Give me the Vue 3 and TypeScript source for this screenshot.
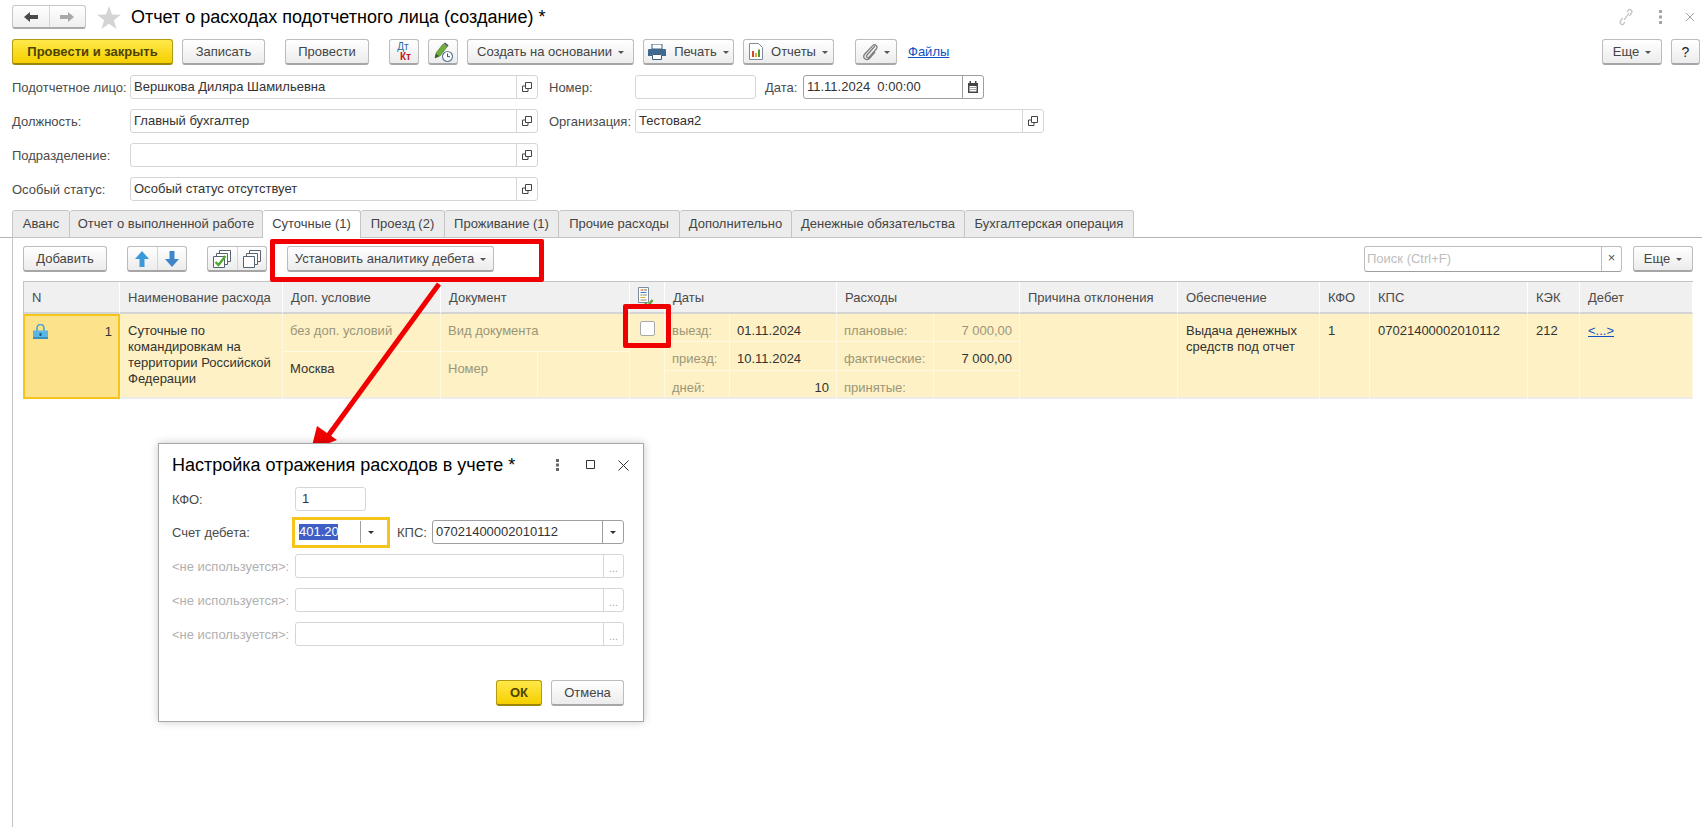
<script setup lang="ts">
interface Tool { label: string; w: number; gap: number; caret?: boolean; icon?: string }
const mainTools: Tool[] = [
  { label: 'Записать', w: 83, gap: 9 },
  { label: 'Провести', w: 84, gap: 20 },
  { label: '', w: 30, gap: 20, icon: 'dtkt' },
  { label: '', w: 30, gap: 9, icon: 'pencil' },
  { label: 'Создать на основании', w: 167, gap: 9, caret: true },
  { label: 'Печать', w: 91, gap: 9, caret: true, icon: 'print' },
  { label: 'Отчеты', w: 91, gap: 9, caret: true, icon: 'report' },
  { label: '', w: 42, gap: 21, caret: true, icon: 'clip' },
]
const tabs = [
  { label: 'Аванс', w: 58 },
  { label: 'Отчет о выполненной работе', w: 193 },
  { label: 'Суточные (1)', w: 98, active: true },
  { label: 'Проезд (2)', w: 84 },
  { label: 'Проживание (1)', w: 114 },
  { label: 'Прочие расходы', w: 121 },
  { label: 'Дополнительно', w: 112 },
  { label: 'Денежные обязательства', w: 173 },
  { label: 'Бухгалтерская операция', w: 169 },
]
const headers = ['N', 'Наименование расхода', 'Доп. условие', 'Документ', '', 'Даты', 'Расходы', 'Причина отклонения', 'Обеспечение', 'КФО', 'КПС', 'КЭК', 'Дебет']
const unused = ['<не используется>:', '<не используется>:', '<не используется>:']
</script>

<template>
  <div class="page">
    <header class="head">
      <div class="nav">
        <span class="nav-cell">
          <svg width="14" height="12" viewBox="0 0 14 12"><path d="M0 6 6 1v3h8v4H6v3z" fill="#4a4a4a" /></svg>
        </span>
        <span class="nav-cell">
          <svg width="14" height="12" viewBox="0 0 14 12"><path d="M14 6 8 1v3H0v4h8v3z" fill="#a8a8a8" /></svg>
        </span>
      </div>
      <svg class="star" width="24" height="23" viewBox="0 0 24 23"><path d="M12 0l3 8.400 9 .3-7.100 5.500 2.600 8.800L12 17.800l-7.500 5.200 2.600-8.800L0 8.700l9-.3z" fill="#d4d4d4" /></svg>
      <h1 class="title">Отчет о расходах подотчетного лица (создание) *</h1>
      <div class="win-icons">
        <svg width="16" height="18" viewBox="0 0 16 18" fill="none" stroke="#bdbdbd" stroke-width="1.200"><path d="M6 12 11 5M9 4l1.500-2c1-1.200 4-.2 3.500 2l-2.500 4M7 14l-1.500 2c-1 1.200-4 .2-3.500-2l2.500-4" /></svg>
        <svg width="4" height="16" viewBox="0 0 4 16"><path d="M0 1h3v3H0zM0 6.500h3v3H0zM0 12h3v3H0z" fill="#a5a5a5" /></svg>
        <svg width="10" height="10" viewBox="0 0 10 10" fill="none" stroke="#a5a5a5"><path d="M1 1l8 8M9 1l-8 8" /></svg>
      </div>
    </header>

    <div class="toolbar">
      <button class="btn primary main-btn">Провести и закрыть</button>
      <button
        v-for="t in mainTools"
        :key="t.label + t.icon"
        class="btn"
        :style="{ width: t.w + 'px', marginLeft: t.gap + 'px' }"
      >
        <span v-if="t.icon === 'dtkt'" class="dtkt"><i>Дт</i><b>Кт</b></span>
        <svg v-if="t.icon === 'pencil'" width="20" height="20" viewBox="0 0 20 20">
          <path d="M2 16l1-5L10 2l4 3-7 9z" fill="#6fae3a" stroke="#4a7d24" stroke-width=".6" />
          <path d="M10.500 1.500l1.500-1 3.500 2.800-1 1.700z" fill="#4b5c68" />
          <path d="M2 16l1-4 3 2z" fill="#3a4a30" />
          <circle cx="14.500" cy="14.500" r="5" fill="#fff" stroke="#5c7d9c" stroke-width="1.200" />
          <path d="M14.500 11.500v3.200h2.500" fill="none" stroke="#3a4f63" />
        </svg>
        <svg v-if="t.icon === 'print'" class="lead" width="18" height="16" viewBox="0 0 18 16">
          <path d="M4 0h10v5H4z" fill="#fff" stroke="#3d5f7c" />
          <path d="M1 5h16a1 1 0 0 1 1 1v6h-4v-2H4v2H0V6a1 1 0 0 1 1-1z" fill="#3d6a8e" />
          <path d="M4.500 10.500h9v5h-9z" fill="#fff" stroke="#3d5f7c" />
        </svg>
        <svg v-if="t.icon === 'report'" class="lead" width="14" height="17" viewBox="0 0 14 17">
          <path d="M.5.500h9l4 4v12H.5z" fill="#fff" stroke="#7d8d9c" />
          <path d="M3 8h2v6H3z" fill="#d04a2c" /><path d="M6 10h2v4H6z" fill="#e2a92a" /><path d="M9 6.500h2V14H9z" fill="#4c9a3d" />
        </svg>
        <svg v-if="t.icon === 'clip'" width="16" height="18" viewBox="0 0 16 18" fill="none" stroke="#7d7d7d" stroke-width="1.300"><path d="M13 3 5 12c-1.500 2 .8 3.600 2.300 2l7-8c2-2.600-1.200-5.800-3.600-3.400L2.800 11c-3 3.500 1.600 7.600 4.800 4.200L13 9" /></svg>
        <span v-if="t.label">{{ t.label }}</span>
        <span v-if="t.caret" class="caret"></span>
      </button>
      <a class="link files">Файлы</a>
      <button class="btn more">Еще<span class="caret"></span></button>
      <button class="btn help">?</button>
    </div>

    <section class="form">
      <div class="form-row">
        <label class="lbl">Подотчетное лицо:</label>
        <div class="field wide"><span class="val">Вершкова Диляра Шамильевна</span><span class="fbtn"><svg class="open" width="10" height="10" viewBox="0 0 10 10" fill="none" stroke="#444"><path d="M3.500.500h6v6h-6zM3 4H.500v5.500H6V7" /></svg></span></div>
        <label class="lbl2">Номер:</label>
        <div class="field num"></div>
        <label class="lbl3">Дата:</label>
        <div class="field date"><span class="val">11.11.2024&nbsp;&nbsp;0:00:00</span><span class="fbtn dark"><svg width="10" height="12" viewBox="0 0 10 12"><path d="M0 2h10v10H0z" fill="#444" /><path d="M1.500 0h1.500v2H1.500zM7 0h1.500v2H7z" fill="#444" /><path d="M1.500 5h7v5.500h-7z" fill="#fff" /><path d="M2.500 6h1v1h-1zM4.500 6h1v1h-1zM6.500 6h1v1h-1zM2.500 8h1v1h-1zM4.500 8h1v1h-1zM6.500 8h1v1h-1z" fill="#444" /></svg></span></div>
      </div>
      <div class="form-row">
        <label class="lbl">Должность:</label>
        <div class="field wide"><span class="val">Главный бухгалтер</span><span class="fbtn"><svg class="open" width="10" height="10" viewBox="0 0 10 10" fill="none" stroke="#444"><path d="M3.500.500h6v6h-6zM3 4H.500v5.500H6V7" /></svg></span></div>
        <label class="lbl2">Организация:</label>
        <div class="field org"><span class="val">Тестовая2</span><span class="fbtn"><svg class="open" width="10" height="10" viewBox="0 0 10 10" fill="none" stroke="#444"><path d="M3.500.500h6v6h-6zM3 4H.500v5.500H6V7" /></svg></span></div>
      </div>
      <div class="form-row">
        <label class="lbl">Подразделение:</label>
        <div class="field wide"><span class="val"></span><span class="fbtn"><svg class="open" width="10" height="10" viewBox="0 0 10 10" fill="none" stroke="#444"><path d="M3.500.500h6v6h-6zM3 4H.500v5.500H6V7" /></svg></span></div>
      </div>
      <div class="form-row">
        <label class="lbl">Особый статус:</label>
        <div class="field wide"><span class="val">Особый статус отсутствует</span><span class="fbtn"><svg class="open" width="10" height="10" viewBox="0 0 10 10" fill="none" stroke="#444"><path d="M3.500.500h6v6h-6zM3 4H.500v5.500H6V7" /></svg></span></div>
      </div>
    </section>

    <nav class="tabs">
      <span
        v-for="t in tabs"
        :key="t.label"
        class="tab"
        :class="{ active: t.active }"
        :style="{ width: t.w + 'px' }"
      >{{ t.label }}</span>
    </nav>

    <section class="panel">
      <div class="panel-bar">
        <button class="btn add">Добавить</button>
        <div class="btn group arrows">
          <span class="cell"><svg width="14" height="16" viewBox="0 0 14 16"><path d="M7 0l7 8H9.500v8h-5V8H0z" fill="#3a9ad9" /></svg></span>
          <span class="cell"><svg width="14" height="16" viewBox="0 0 14 16"><path d="M7 16l7-8H9.500V0h-5v8H0z" fill="#3f86c9" /></svg></span>
        </div>
        <div class="btn group checks">
          <span class="cell"><svg width="18" height="18" viewBox="0 0 18 18">
            <path d="M6.500.500h11v11h-11z" fill="#fff" stroke="#54636f" /><path d="M3.500 3.500h11v11h-11z" fill="#fff" stroke="#54636f" /><path d="M.500 6.500h11v11H.500z" fill="#fff" stroke="#54636f" />
            <path d="M2.500 12l3 3 7-9" fill="none" stroke="#4fa62c" stroke-width="2.400" /></svg></span>
          <span class="cell"><svg width="18" height="18" viewBox="0 0 18 18" fill="#fff" stroke="#54636f">
            <path d="M6.500.500h11v11h-11z" /><path d="M3.500 3.500h11v11h-11z" /><path d="M.500 6.500h11v11H.500z" /></svg></span>
        </div>
        <button class="btn analytic">Установить аналитику дебета<span class="caret"></span></button>
        <div class="search"><span class="ph">Поиск (Ctrl+F)</span><span class="sx">×</span></div>
        <button class="btn more2">Еще<span class="caret"></span></button>
      </div>

      <div class="grid">
        <div v-for="(h, i) in headers" :key="i" class="th">
          <template v-if="h">{{ h }}</template>
          <svg v-else width="15" height="20" viewBox="0 0 15 20">
            <path d="M.500.500h10v15H.500z" fill="#fff" stroke="#7d8d9c" />
            <path d="M2.500 3h3" stroke="#d04a2c" /><path d="M6 3h3" stroke="#666" /><path d="M2.500 5.500h6" stroke="#3a7ad0" /><path d="M2.500 8h2" stroke="#4c9a3d" /><path d="M5 8h4" stroke="#888" /><path d="M2.500 10.500h5" stroke="#e2a92a" /><path d="M2.500 13h6" stroke="#888" />
            <path d="M7 16l3 3 4.500-6" fill="none" stroke="#4fa62c" stroke-width="2.200" />
          </svg>
        </div>

        <div class="td ncell">
          <svg width="15" height="16" viewBox="0 0 15 16">
            <path d="M4 7V4a3.500 3.500 0 0 1 7 0v3" fill="none" stroke="#4aa3d4" stroke-width="1.600" />
            <path d="M0 6.500h15V15H0z" fill="#5cb6e4" /><path d="M0 13h15v2H0z" fill="#3d8fc0" /><path d="M6.500 9h2v3h-2z" fill="#1c5b82" />
          </svg>
          <span>1</span>
        </div>
        <div class="td pad name">Суточные по командировкам на территории Российской Федерации</div>
        <div class="td stack">
          <div class="sub top gray">без доп. условий</div>
          <div class="sub">Москва</div>
        </div>
        <div class="td stack">
          <div class="sub top gray">Вид документа</div>
          <div class="doc-bottom"><span class="gray">Номер</span><i></i></div>
        </div>
        <div class="td chk"><span class="box"></span></div>
        <div class="td triple">
          <span class="gray">выезд:</span><span>01.11.2024</span>
          <span class="gray">приезд:</span><span>10.11.2024</span>
          <span class="gray">дней:</span><span class="right">10</span>
        </div>
        <div class="td triple money">
          <span class="gray">плановые:</span><span class="right gray">7 000,00</span>
          <span class="gray">фактические:</span><span class="right">7 000,00</span>
          <span class="gray">принятые:</span><span></span>
        </div>
        <div class="td pad"></div>
        <div class="td pad">Выдача денежных средств под отчет</div>
        <div class="td pad">1</div>
        <div class="td pad">07021400002010112</div>
        <div class="td pad">212</div>
        <div class="td pad"><a class="link">&lt;...&gt;</a></div>
      </div>
    </section>

    <div class="mark mark1"></div>
    <div class="mark mark2"></div>
    <svg class="arrow" width="150" height="180" viewBox="0 0 150 180">
      <path d="M129 2 15 158" stroke="#f00000" stroke-width="5" fill="none" />
      <path d="M1 168 7 144 27 158z" fill="#f00000" />
    </svg>

    <div class="dialog">
      <div class="dlg-head">
        <h2 class="dlg-title">Настройка отражения расходов в учете *</h2>
        <svg class="dlg-dots" width="4" height="12" viewBox="0 0 4 12"><path d="M0 0h3v3H0zM0 4.500h3v3H0zM0 9h3v3H0z" fill="#666" /></svg>
        <svg class="dlg-max" width="10" height="10" viewBox="0 0 10 10"><path d="M.500.500h8v8h-8z" fill="none" stroke="#333" /></svg>
        <svg class="dlg-close" width="11" height="11" viewBox="0 0 11 11"><path d="M.500.500l10 10M10.500.500l-10 10" stroke="#333" fill="none" /></svg>
      </div>
      <div class="dlg-row r1">
        <label class="dlbl">КФО:</label>
        <div class="field dkfo"><span class="val">1</span></div>
      </div>
      <div class="dlg-row r2">
        <label class="dlbl">Счет дебета:</label>
        <div class="focus">
          <span class="sel">401.20</span><span class="fline"></span><span class="caret dc"></span>
        </div>
        <label class="kps">КПС:</label>
        <div class="field dark dkps"><span class="val">07021400002010112</span><span class="fbtn dark"><span class="caret dk"></span></span></div>
      </div>
      <div v-for="(u, i) in unused" :key="i" class="dlg-row r3">
        <label class="dlbl off">{{ u }}</label>
        <div class="field dun"><span class="val"></span><span class="fbtn dots">...</span></div>
      </div>
      <div class="dlg-foot">
        <button class="btn primary ok">ОК</button>
        <button class="btn cancel">Отмена</button>
      </div>
    </div>
  </div>
</template>

<style scoped>
.page {
  position: relative;
  width: 1702px;
  height: 827px;
  overflow: hidden;
  background: #fff;
  font-family: "Liberation Sans", Arial, sans-serif;
  font-size: 13px;
  color: #333;
}
button { font: inherit; }
.head { display: flex; align-items: center; height: 24px; padding: 5px 0 0 12px; }
.nav {
  display: flex; width: 74px; height: 24px; box-sizing: border-box;
  border: 1px solid #c8c8c8; border-bottom: 2px solid #aaa; border-radius: 3px;
  background: linear-gradient(#fff, #efefef);
}
.nav-cell { flex: 1; display: flex; align-items: center; justify-content: center; }
.nav-cell + .nav-cell { border-left: 1px solid #d5d5d5; }
.star { margin-left: 11px; }
.title { margin: 0 0 0 10px; font-size: 18px; font-weight: 400; color: #000; white-space: nowrap; }
.win-icons { margin-left: auto; display: flex; align-items: center; gap: 0; padding-right: 7px; }
.win-icons svg:nth-child(2) { margin-left: 25px; }
.win-icons svg:nth-child(3) { margin-left: 22px; }

.btn {
  display: inline-flex; align-items: center; justify-content: center;
  box-sizing: border-box; height: 26px; padding: 0;
  border: 1px solid #bcbcbc; border-bottom: 2px solid #a6a6a6; border-radius: 3px;
  background: linear-gradient(#fff, #ececec);
  color: #444; white-space: nowrap;
}
.primary {
  background: linear-gradient(#ffe94a, #f6cf00);
  border-color: #b39a10; border-bottom-color: #9c860c;
  color: #4d4300;
}
.toolbar { display: flex; margin-top: 10px; padding-left: 12px; }
.main-btn { width: 161px; font-weight: 700; }
.caret { display: inline-block; width: 0; height: 0; margin-left: 6px; margin-top: 2px; border: 3px solid transparent; border-top: 3px solid #555; border-bottom: 0; }
.lead { margin-right: 8px; }
.dtkt { display: flex; flex-direction: column; font-size: 10px; font-weight: 700; line-height: 10px; font-style: normal; margin-left: -2px; }
.dtkt i { font-style: normal; color: #2d6aa8; font-weight: 400; }
.dtkt b { color: #c01818; margin-left: 5px; }
.link { color: #0d52c4; text-decoration: underline; }
.files { margin-left: 11px; line-height: 26px; }
.more { width: 60px; margin-left: auto; }
.help { width: 29px; margin-left: 9px; margin-right: 2px; font-size: 14px; color: #222; }

.form { margin-top: 10px; }
.form-row { display: flex; align-items: center; height: 24px; margin-bottom: 10px; padding-left: 12px; }
.lbl { width: 118px; color: #4a4a4a; white-space: nowrap; }
.lbl2 { width: 86px; margin-left: 11px; color: #4a4a4a; white-space: nowrap; }
.lbl3 { width: 38px; margin-left: 9px; color: #4a4a4a; }
.field {
  display: flex; box-sizing: border-box; height: 24px;
  border: 1px solid #d6d6d6; border-radius: 3px; background: #fff;
  color: #333;
}
.field.date, .field.dark { border-color: #9f9f9f; }
.wide { width: 408px; }
.num { width: 121px; }
.date { width: 181px; }
.org { width: 409px; }
.val { flex: 1; padding-left: 3px; line-height: 22px; white-space: nowrap; overflow: hidden; }
.fbtn { width: 20px; display: flex; align-items: center; justify-content: center; border-left: 1px solid #d6d6d6; }
.fbtn.dark { border-left-color: #9f9f9f; }
.dots { color: #aaa; font-size: 11px; padding-top: 3px; box-sizing: border-box; }

.tabs { display: flex; margin-top: 0; padding-left: 12px; height: 28px; box-sizing: border-box; border-bottom: 1px solid #b5b5b5; margin-top: -1px; }
.tab {
  box-sizing: border-box; height: 28px; line-height: 26px; text-align: center;
  background: #ececec; border: 1px solid #c4c4c4; border-left: 0; border-radius: 3px 3px 0 0;
  color: #444; white-space: nowrap;
}
.tab:first-child { border-left: 1px solid #c4c4c4; }
.tab.active { background: #fff; border-bottom: 0; }

.panel { height: 589px; margin-left: 12px; border-left: 1px solid #c4c4c4; padding: 8px 9px 0 10px; }
.panel-bar { display: flex; height: 26px; }
.add { width: 84px; }
.group { display: flex; width: 60px; }
.group .cell { flex: 1; height: 100%; display: flex; align-items: center; justify-content: center; }
.group .cell + .cell { border-left: 1px solid #d5d5d5; }
.arrows { margin-left: 20px; }
.checks { margin-left: 20px; }
.analytic { width: 207px; margin-left: 20px; }
.search {
  display: flex; box-sizing: border-box; width: 258px; height: 26px; margin-left: auto;
  border: 1px solid #bdbdbd; border-bottom-color: #9f9f9f; border-radius: 3px;
}
.ph { flex: 1; padding-left: 2px; line-height: 24px; color: #bdbdbd; }
.sx { width: 19px; border-left: 1px solid #bdbdbd; text-align: center; line-height: 22px; color: #555; }
.more2 { width: 60px; margin-left: 11px; }

.grid {
  display: grid; width: 1670px; margin-top: 9px;
  grid-template-columns: 97px 163px 158px 189px 35px 172px 183px 158px 142px 50px 158px 52px 113px;
  grid-template-rows: 32px 85px;
  border-top: 1px solid #c4c4c4;
  row-gap: 0;
}
.th {
  display: flex; align-items: center; box-sizing: border-box; padding-left: 8px;
  background: #f0f0f0; border-right: 1px solid #fff; border-bottom: 2px solid #d4d4d4;
  color: #4a4a4a; white-space: nowrap;
}
.th:first-child { border-left: 1px solid #c4c4c4; }
.td {
  box-sizing: border-box; background: #fdf1c5; border-right: 1px solid #fff9e4; border-bottom: 2px solid #ececec;
  color: #333; line-height: 16px;
}
.pad { padding: 9px 7px 0 8px; }
.ncell {
  display: flex; justify-content: space-between; align-items: flex-start; padding: 8px 6px 0 8px;
  background: #fde28c; border: 2px solid #f6c51c;
}
.stack { display: flex; flex-direction: column; }
.sub { padding: 9px 0 0 7px; flex: 1; }
.sub.top { flex: 0 0 28px; border-bottom: 1px solid #fff9e4; }
.gray { color: #9c9678; }
.doc-bottom { flex: 1; display: flex; }
.doc-bottom span { width: 89px; padding: 9px 0 0 7px; border-right: 1px solid #fff9e4; }
.chk { display: flex; justify-content: center; padding-top: 7px; }
.box { width: 15px; height: 15px; box-sizing: border-box; background: #fff; border: 1px solid #a9a9a9; border-radius: 2px; }
.triple { display: grid; grid-template-columns: 65px 1fr; grid-template-rows: 28px 29px 26px; }
.money { grid-template-columns: 97px 1fr; }
.triple > span { box-sizing: border-box; padding: 9px 7px 0; border-bottom: 1px solid #fff9e4; white-space: nowrap; }
.triple > span:nth-child(odd) { border-right: 1px solid #fff9e4; }
.triple > span:nth-last-child(-n+2) { border-bottom: 0; }
.right { text-align: right; }

.mark { position: absolute; box-sizing: border-box; border: 5px solid #f00000; border-radius: 2px; }
.mark1 { left: 270px; top: 239px; width: 274px; height: 43px; }
.mark2 { left: 623px; top: 304px; width: 48px; height: 44px; }
.arrow { position: absolute; left: 310px; top: 282px; }

.dialog {
  position: absolute; left: 158px; top: 443px; width: 486px; height: 279px; box-sizing: border-box;
  border: 1px solid #a8a8a8; background: #fff; box-shadow: 0 0 8px rgba(0,0,0,.22);
  padding: 0 19px 0 13px;
}
.dlg-head { display: flex; align-items: center; height: 42px; }
.dlg-title { margin: 0; font-size: 18px; font-weight: 400; color: #000; white-space: nowrap; }
.dlg-dots { margin-left: auto; margin-right: 26px; }
.dlg-max { margin-right: 22px; }
.dlg-close { margin-right: -5px; }
.dlg-row { display: flex; align-items: center; height: 24px; }
.r1 { margin-top: 1px; }
.r2 { margin-top: 9px; }
.r3 { margin-top: 10px; }
.dlbl { width: 123px; color: #4a4a4a; white-space: nowrap; }
.off { color: #b0b0b0; }
.dkfo { width: 71px; }
.dkfo .val { padding-left: 6px; }
.focus {
  display: flex; align-items: center; box-sizing: border-box; width: 98px; height: 31px; margin-left: -3px;
  border: 3px solid #f6c51c; padding-left: 4px; flex: none;
}
.sel { width: 39px; height: 16px; line-height: 16px; background: #3f5fc7; color: #fff; }
.fline { width: 1px; height: 22px; margin-left: 22px; background: #9f9f9f; }
.dc { margin: 0 0 0 7px; border-top-color: #333; }
.dk { margin: 0; border-top-color: #333; }
.kps { margin-left: 7px; width: 35px; color: #4a4a4a; }
.dkps { width: 192px; }
.dkps .val { padding-left: 3px; }
.dun { width: 329px; }
.dlg-foot { display: flex; justify-content: flex-end; margin-top: 34px; }
.ok { width: 46px; font-weight: 700; }
.cancel { width: 73px; margin-left: 9px; }
</style>

<style>
html, body { margin: 0; background: #fff; overflow: hidden; }
</style>
